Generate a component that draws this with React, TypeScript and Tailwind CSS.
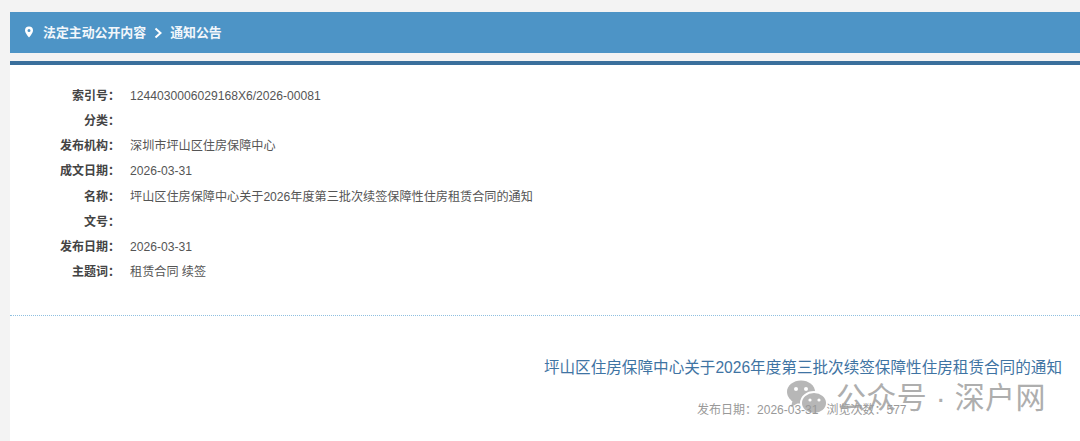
const FONT = '"Liberation Sans", "Noto Sans CJK SC", sans-serif';

const META: [string, string][] = [
  ["索引号\uFF1A", "1244030006029168X6/2026-00081"],
  ["分类\uFF1A", ""],
  ["发布机构\uFF1A", "深圳市坪山区住房保障中心"],
  ["成文日期\uFF1A", "2026-03-31"],
  ["名称\uFF1A", "坪山区住房保障中心关于2026年度第三批次续签保障性住房租赁合同的通知"],
  ["文号\uFF1A", ""],
  ["发布日期\uFF1A", "2026-03-31"],
  ["主题词\uFF1A", "租赁合同 续签"],
];

function Watermark() {
  return (
    <div className="absolute left-[786px] top-[380px] flex items-center opacity-85">
      <svg width="42" height="35" viewBox="0 0 42 35">
        <ellipse cx="15" cy="12" rx="14" ry="11.5" fill="#ababab" />
        <path d="M7 19 L5 27 L14 22 Z" fill="#ababab" />
        <circle cx="10" cy="9" r="2" fill="#fff" />
        <circle cx="20" cy="9" r="2" fill="#fff" />
        <ellipse cx="28" cy="23" rx="13" ry="11" fill="#ababab" stroke="#fff" strokeWidth="2" />
        <circle cx="24" cy="20" r="1.6" fill="#fff" />
        <circle cx="33" cy="20" r="1.6" fill="#fff" />
      </svg>
      <span className="ml-[8px] text-[30px] leading-none tracking-[0.35px] text-[#a0a0a0]">公众号 · 深户网</span>
    </div>
  );
}

export default function App() {
  return (
    <div className="relative h-[441px] w-[1080px] overflow-hidden bg-[#f3f3f3] pl-[10px] pt-[12px]" style={{ fontFamily: FONT }}>
      <div className="flex h-[41px] items-center bg-[#4d94c6] pl-[14px] text-[12.9px] font-bold text-[#f2f7fb]">
        <svg width="10" height="12" viewBox="0 0 10 12" className="mr-[9px] mb-[2px]">
          <path fillRule="evenodd" d="M5 0.5a4 4 0 0 1 4 4c0 2.6-4 7-4 7s-4-4.4-4-7a4 4 0 0 1 4-4zM5 3a1.5 1.5 0 1 0 0 3a1.5 1.5 0 0 0 0-3z" fill="#fff" />
        </svg>
        <span>法定主动公开内容</span>
        <svg width="10" height="12" viewBox="0 0 10 12" className="mx-[7px]">
          <path d="M2.5 1.5 L7.5 6 L2.5 10.5" fill="none" stroke="#fff" strokeWidth="2" />
        </svg>
        <span>通知公告</span>
      </div>

      <div className="mt-[8px] h-[380px] border-t-[4px] border-[#3a6f9c] bg-white">
        <div className="pt-[18.5px]">
          {META.map(([label, value]) => (
            <div key={label} className="flex h-[25.15px] items-center text-[12px]">
              <div className="w-[110px] text-right font-bold text-[#444]">{label}</div>
              <div className="ml-[10px] text-[12.13px] text-[#555]">{value}</div>
            </div>
          ))}
        </div>
        <div className="mt-[30px] border-t border-dotted border-[#8fc0e0]" />
        <div className="pr-[18px] pt-[42px] text-right text-[15.6px] leading-[20px] text-[#3f74a3]">
          坪山区住房保障中心关于2026年度第三批次续签保障性住房租赁合同的通知
        </div>
        <div className="relative z-10 ml-[687px] mt-[25px] flex text-[12px] leading-[14px] text-[#999]">
          <span>发布日期{"\uFF1A"}2026-03-31</span>
          <span className="ml-[8px]">浏览次数{"\uFF1A"}577</span>
        </div>
      </div>
      <Watermark />
    </div>
  );
}
